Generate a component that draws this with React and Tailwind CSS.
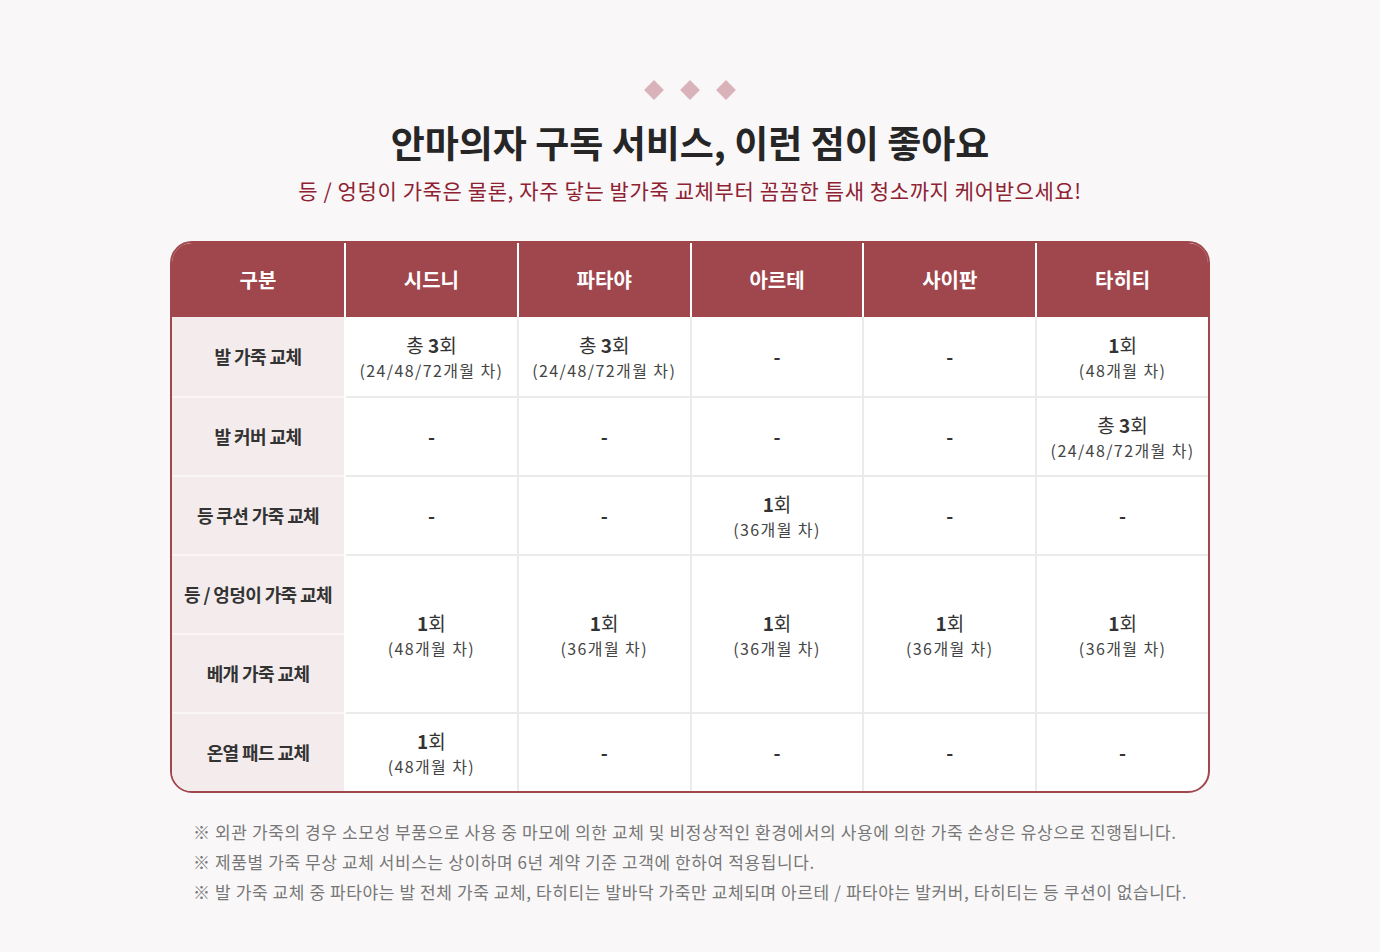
import React from "react";

const FONT = { fontFamily: '"Noto Sans CJK KR", "Noto Sans", sans-serif' };

const Count = ({ total, n, sub }) => (
  <div className="flex flex-col items-center leading-none">
    <p className="text-[19px] text-[#333]">
      {total ? "총 " : ""}
      <span className="font-bold">{n}</span>회
    </p>
    <p className="mt-[8px] text-[16px] tracking-[1.4px] text-[#444]">({sub})</p>
  </div>
);

const Dash = () => <span className="text-[19px] font-bold text-[#333]">-</span>;

const A3 = <Count total n="3" sub="24/48/72개월 차" />;
const B48 = <Count n="1" sub="48개월 차" />;
const B36 = <Count n="1" sub="36개월 차" />;
const D = <Dash />;

const labels = ["발 가죽 교체", "발 커버 교체", "등 쿠션 가죽 교체", "등 / 엉덩이 가죽 교체", "베개 가죽 교체", "온열 패드 교체"];

// each column: [row1, row2, row3, merged rows 4-5, row6]
const columns = [
  { name: "시드니", cells: [A3, D, D, B48, B48] },
  { name: "파타야", cells: [A3, D, D, B36, D] },
  { name: "아르테", cells: [D, D, B36, B36, D] },
  { name: "사이판", cells: [D, D, D, B36, D] },
  { name: "타히티", cells: [B48, A3, D, B36, D] },
];

export default function App() {
  return (
    <div className="min-h-[952px] bg-[#f9f7f8] pt-[83px]" style={FONT}>
      <div className="flex justify-center gap-[22px]">
        {[0, 1, 2].map((i) => (
          <span key={i} className="block h-[14px] w-[14px] rotate-45 bg-[#d9b3b9]" />
        ))}
      </div>
      <h1 className="mt-[21px] text-center text-[37px] font-bold leading-[48px] tracking-[0px] text-[#262626]">
        안마의자 구독 서비스, 이런 점이 좋아요
      </h1>
      <p className="mt-[9px] text-center text-[21px] leading-[30px] tracking-[0.6px] text-[#8e2232]">
        등 / 엉덩이 가죽은 물론, 자주 닿는 발가죽 교체부터 꼼꼼한 틈새 청소까지 케어받으세요!
      </p>

      <div className="mx-auto mt-[36px] w-[1040px] overflow-hidden rounded-[22px] border-2 border-[#a0464d] bg-white">
        <div className="flex h-[74px] bg-[#a0464d] text-[20px] font-bold text-white">
          <div className="flex w-[172px] items-center justify-center">구분</div>
          {columns.map((c) => (
            <div key={c.name} className="flex flex-1 items-center justify-center border-l-2 border-white">
              {c.name}
            </div>
          ))}
        </div>
        <div className="flex">
          <div className="flex w-[172px] flex-col bg-[#f4ecec]">
            {labels.map((l, i) => (
              <div
                key={l}
                className={
                  "flex h-[79px] items-center justify-center text-[18px] font-bold tracking-[-0.6px] text-[#333] " +
                  (i === 0 ? "" : "border-t-2 border-[#faf6f6]")
                }
              >
                {l}
              </div>
            ))}
          </div>
          {columns.map((c, ci) => (
            <div
              key={c.name}
              className={"flex flex-1 flex-col border-l-2 " + (ci === 0 ? "border-white" : "border-[#ebebeb]")}
            >
              {c.cells.map((cell, i) => (
                <div
                  key={i}
                  className={
                    "flex items-center justify-center " +
                    (i === 0 ? "h-[79px]" : i === 3 ? "h-[158px] border-t-2 border-[#ebebeb]" : "h-[79px] border-t-2 border-[#ebebeb]")
                  }
                >
                  {cell}
                </div>
              ))}
            </div>
          ))}
        </div>
      </div>

      <ul className="mx-auto mt-[24px] w-[1000px] pl-[3px] text-[17px] leading-[30px] tracking-[0.6px] text-[#777]">
        <li>※ 외관 가죽의 경우 소모성 부품으로 사용 중 마모에 의한 교체 및 비정상적인 환경에서의 사용에 의한 가죽 손상은 유상으로 진행됩니다.</li>
        <li>※ 제품별 가죽 무상 교체 서비스는 상이하며 6년 계약 기준 고객에 한하여 적용됩니다.</li>
        <li>※ 발 가죽 교체 중 파타야는 발 전체 가죽 교체, 타히티는 발바닥 가죽만 교체되며 아르테 / 파타야는 발커버, 타히티는 등 쿠션이 없습니다.</li>
      </ul>
    </div>
  );
}
